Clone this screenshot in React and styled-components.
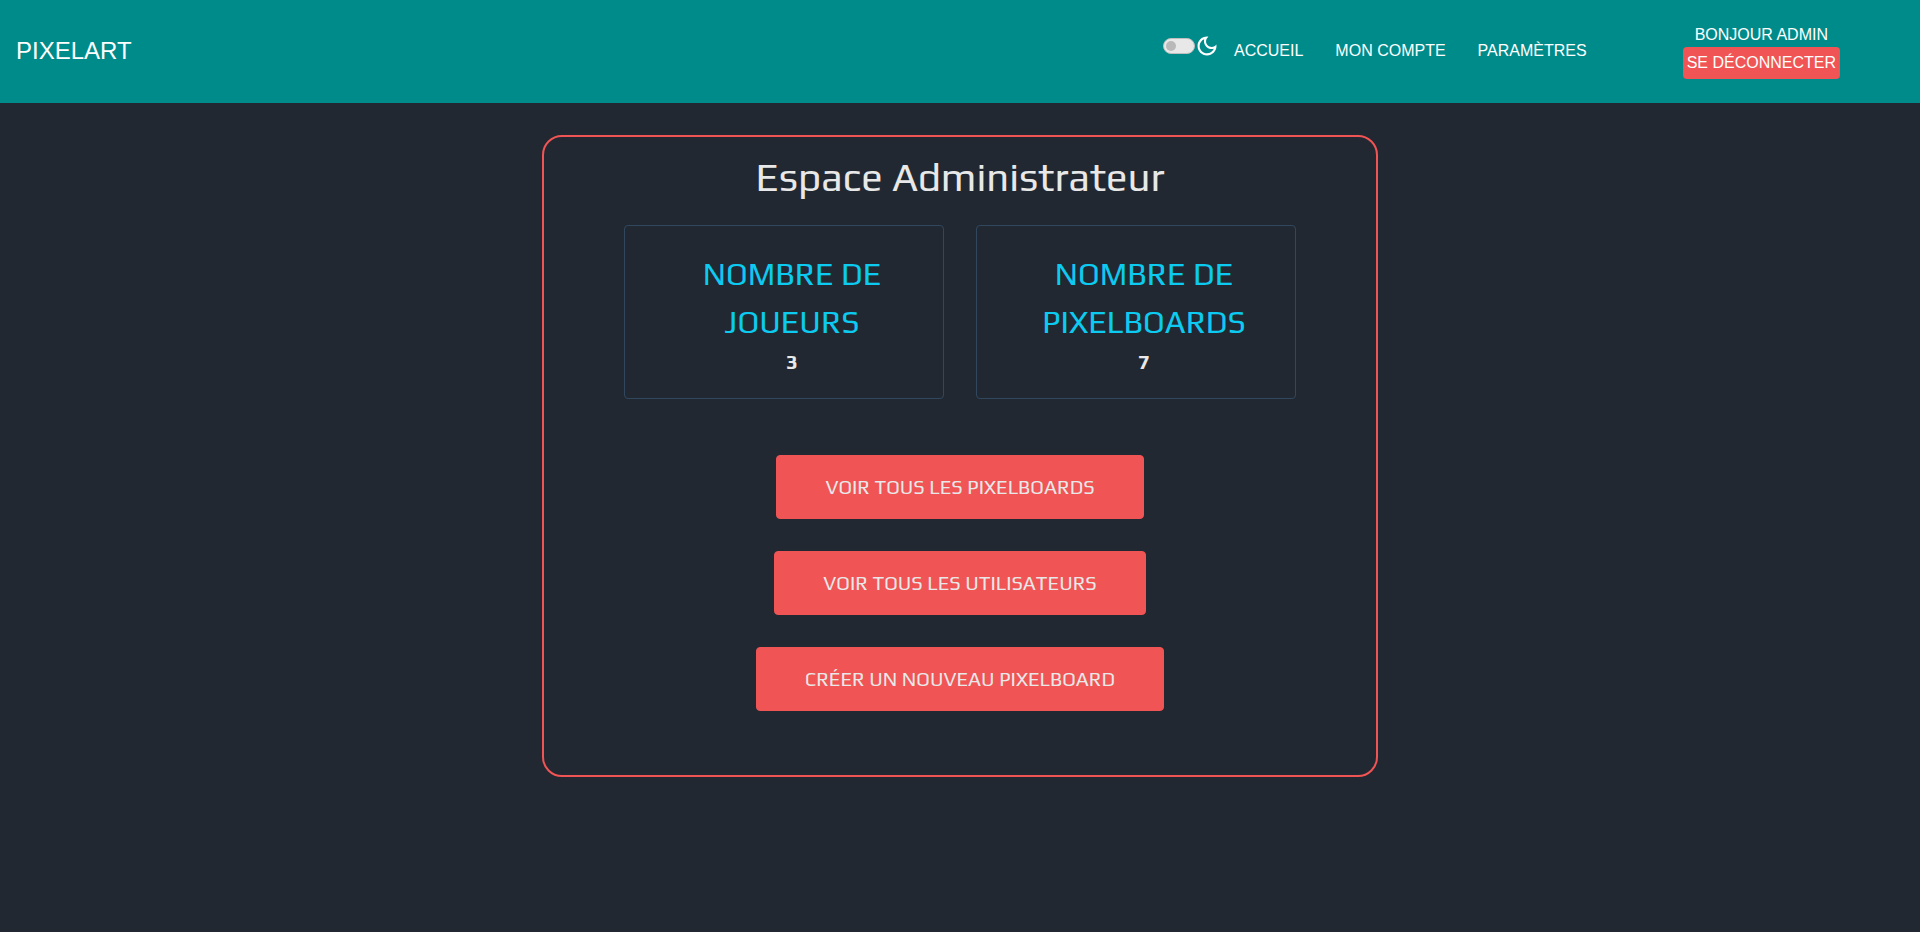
import React from "react";
import styled, { createGlobalStyle } from "styled-components";

const colors = {
  teal: "#008b8b",
  night: "#222831",
  coral: "#f05454",
  cyan: "#0dcaf0",
  slate: "#30475e",
  light: "#e8e8e8",
};

const GlobalStyle = createGlobalStyle`
  *, *::before, *::after { box-sizing: border-box; }
  body {
    margin: 0;
    min-height: 100vh;
    background: ${colors.night};
    color: ${colors.light};
    font: 400 20px/30px Play, "Noto Sans", sans-serif;
  }
`;

const Header = styled.header`
  display: flex;
  align-items: center;
  min-height: 103px;
  padding: 0 80px 2px 16px;
  background: ${colors.teal};
  font: 400 16px/24px Arial, "Liberation Sans", sans-serif;
  text-transform: uppercase;
  color: #fff;
`;

const Brand = styled.a`
  margin-right: auto;
  font-size: 24px;
  line-height: 32px;
  color: inherit;
  text-decoration: none;
`;

const ThemeToggle = styled.label`
  display: flex;
  align-items: center;
  gap: 2px;
  margin: 0 17px 9px 0;
`;

const Switch = styled.input`
  appearance: none;
  display: flex;
  align-items: center;
  width: 32px;
  height: 16px;
  margin: 0;
  padding: 0 2px;
  border: 1px solid #bfbfbf;
  border-radius: 8px;
  background: #e8e8e8;
  &::before {
    content: "";
    width: 10px;
    height: 10px;
    border-radius: 50%;
    background: #b9b9b9;
  }
  &:checked { justify-content: flex-end; }
`;

const Nav = styled.nav`
  display: flex;
  gap: 32px;
`;

const NavLink = styled.a`
  color: inherit;
  text-decoration: none;
`;

const User = styled.div`
  display: flex;
  flex-direction: column;
  align-items: center;
  margin-left: 96px;
`;

const Logout = styled.button`
  height: 32px;
  padding: 0 4px;
  border: 0;
  border-radius: 4px;
  background: ${colors.coral};
  color: inherit;
  font: inherit;
  text-transform: inherit;
`;

const Panel = styled.main`
  display: flex;
  flex-direction: column;
  align-items: center;
  width: 100%;
  max-width: 836px;
  margin: 32px auto;
  padding: 16px 80px 64px;
  border: 2px solid ${colors.coral};
  border-radius: 20px;
`;

const Title = styled.h1`
  margin: 0 0 24px;
  font-size: 40px;
  font-weight: 400;
  line-height: 48px;
`;

const Stats = styled.div`
  display: grid;
  grid-template-columns: 1fr 1fr;
  gap: 32px;
  width: 100%;
  margin-bottom: 56px;
`;

const Stat = styled.section`
  padding: 24px 32px 20px 48px;
  border: 1px solid ${colors.slate};
  border-radius: 4px;
  text-align: center;
`;

const StatTitle = styled.h2`
  margin: 0;
  font-size: 32px;
  font-weight: 400;
  line-height: 48px;
  text-transform: uppercase;
  color: ${colors.cyan};
`;

const StatValue = styled.strong`
  display: block;
  line-height: 32px;
`;

const Actions = styled.div`
  display: flex;
  flex-direction: column;
  align-items: center;
  gap: 32px;
`;

const Action = styled.button`
  height: 64px;
  padding: 0 48px;
  border: 1px solid ${colors.coral};
  border-radius: 4px;
  background: ${colors.coral};
  color: inherit;
  font: inherit;
  text-transform: uppercase;
`;

const MoonIcon = () => (
  <svg width="20" height="20" viewBox="2.5 2.5 19 19" fill="currentColor" aria-hidden="true">
    <path d="M9.37 5.51c-.18.64-.27 1.31-.27 1.99 0 4.08 3.32 7.4 7.4 7.4.68 0 1.35-.09 1.99-.27C17.45 17.19 14.93 19 12 19c-3.86 0-7-3.14-7-7 0-2.93 1.81-5.45 4.37-6.49zM12 3c-4.97 0-9 4.03-9 9s4.03 9 9 9 9-4.03 9-9c0-.46-.04-.92-.1-1.36-.98 1.37-2.58 2.26-4.4 2.26-2.98 0-5.4-2.42-5.4-5.4 0-1.81.89-3.42 2.26-4.4-.44-.06-.9-.1-1.36-.1z" />
  </svg>
);

const stats = [
  { label: "Nombre de joueurs", value: 3 },
  { label: "Nombre de pixelboards", value: 7 },
];

const actions = [
  "Voir tous les pixelboards",
  "Voir tous les utilisateurs",
  "Créer un nouveau pixelboard",
];

export default function App() {
  return (
    <>
      <GlobalStyle />
      <Header>
        <Brand href="#">PixelArt</Brand>
        <ThemeToggle>
          <Switch type="checkbox" aria-label="Mode sombre" />
          <MoonIcon />
        </ThemeToggle>
        <Nav>
          <NavLink href="#">Accueil</NavLink>
          <NavLink href="#">Mon compte</NavLink>
          <NavLink href="#">Paramètres</NavLink>
        </Nav>
        <User>
          <span>Bonjour admin</span>
          <Logout type="button">Se déconnecter</Logout>
        </User>
      </Header>
      <Panel>
        <Title>Espace Administrateur</Title>
        <Stats>
          {stats.map(({ label, value }) => (
            <Stat key={label}>
              <StatTitle>{label}</StatTitle>
              <StatValue>{value}</StatValue>
            </Stat>
          ))}
        </Stats>
        <Actions>
          {actions.map((label) => (
            <Action type="button" key={label}>{label}</Action>
          ))}
        </Actions>
      </Panel>
    </>
  );
}
